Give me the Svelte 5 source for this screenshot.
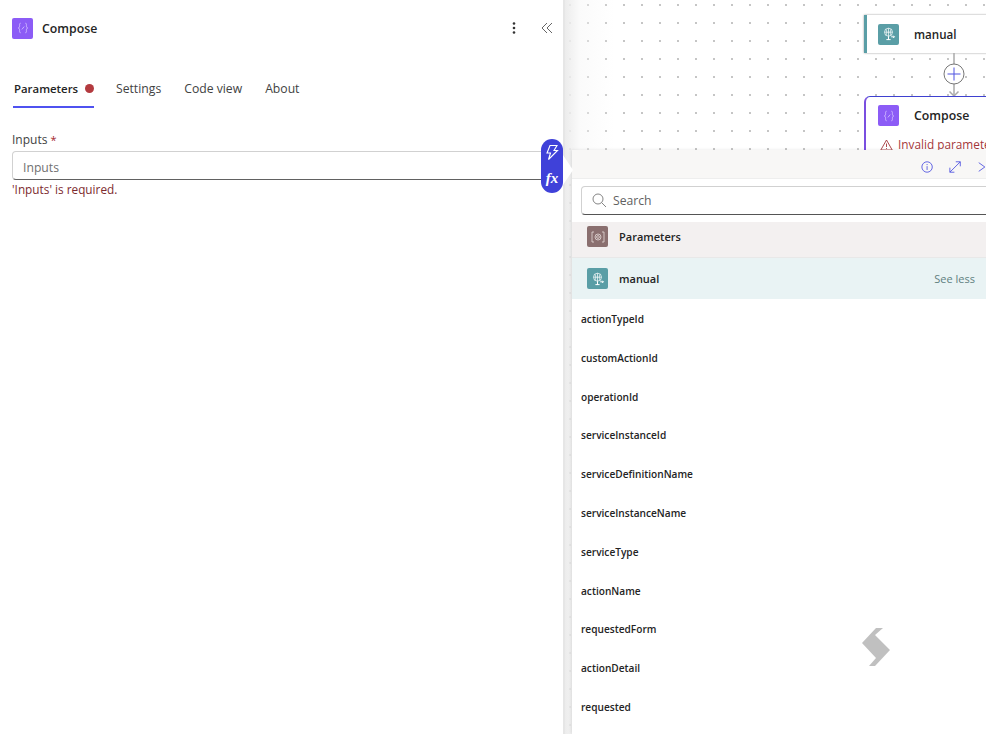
<script>
  const tabs = ['Settings', 'Code view', 'About'];
  const rows = ['actionTypeId','customActionId','operationId','serviceInstanceId','serviceDefinitionName','serviceInstanceName','serviceType','actionName','requestedForm','actionDetail','requested'];
</script>

{#snippet composeIcon()}
  <span class="tile purple">
    <svg width="12" height="12" viewBox="0 0 12 12" fill="none" stroke="#d9c8ff" stroke-width="0.8">
      <path d="M3.6 1.2C2.4 1.2 2.6 2.4 2.6 3.4S2.6 5.6 1.4 6C2.6 6.4 2.6 7.6 2.6 8.6S2.4 10.8 3.6 10.8M8.4 1.2C9.6 1.2 9.4 2.4 9.4 3.4S9.4 5.6 10.6 6C9.4 6.4 9.4 7.6 9.4 8.6S9.6 10.8 8.4 10.8M4.9 7.4L7.2 4.6"/>
    </svg>
  </span>
{/snippet}

{#snippet manualIcon()}
  <span class="tile teal">
    <svg width="14" height="14" viewBox="0 0 14 14" fill="none" stroke="#fff" stroke-width="0.7">
      <circle cx="6.5" cy="5.2" r="4"/>
      <path d="M2.5 5.2H10.5M6.5 1.2V9.2M4 2.2C5 4 5 6.4 4 8.2M9 2.2C8 4 8 6.4 9 8.2"/>
      <path d="M6.5 9.2V13M4.4 12.6H8.6M9.2 9.8H12.4M11.2 8.6L12.4 9.8L11.2 11" stroke-width="1"/>
    </svg>
  </span>
{/snippet}

<div class="page">
  <aside class="side">
    <header class="head">
      {@render composeIcon()}
      <h1>Compose</h1>
      <svg class="dots" width="4" height="14" viewBox="0 0 4 14" fill="#333"><circle cx="2" cy="2.5" r="1.3"/><circle cx="2" cy="7" r="1.3"/><circle cx="2" cy="11.5" r="1.3"/></svg>
      <svg class="chev" width="12" height="12" viewBox="0 0 12 12" fill="none" stroke="#555" stroke-width="0.9"><path d="M6 1L1 6L6 11M11 1L6 6L11 11"/></svg>
    </header>

    <nav class="tabs">
      <div class="tab active">Parameters <i class="err"></i></div>
      {#each tabs as t}<div class="tab">{t}</div>{/each}
    </nav>

    <div class="field">
      <div class="label">Inputs <span class="star">*</span></div>
      <div class="input">Inputs</div>
      <div class="msg">'Inputs' is required.</div>
    </div>
  </aside>

  <main class="canvas">
    <div class="fade"></div>

    <div class="node manual-node">
      {@render manualIcon()}
      <span class="node-name small">manual</span>
    </div>

    <svg class="edge" width="24" height="46" viewBox="0 0 24 46" fill="none">
      <path d="M12 0V43" stroke="#aaa" stroke-width="1.5"/>
      <path d="M7.5 38.5L12 43L16.5 38.5" stroke="#aaa" stroke-width="1.5"/>
      <circle cx="12" cy="21" r="10" fill="#fff" stroke="#777"/>
      <path d="M12 14.5V27.5M5.5 21H18.5" stroke="#4f52e0" stroke-width="1"/>
    </svg>

    <div class="node compose-node">
      <div class="compose-top">
        {@render composeIcon()}
        <span class="node-name">Compose</span>
      </div>
      <div class="invalid">
        <svg width="13" height="12" viewBox="0 0 13 12" fill="none" stroke="#a4373a" stroke-width="0.9"><path d="M6.5 1L12.2 11H.8Z"/><path d="M6.5 4.5V8M6.5 9V9.9"/></svg>
        <span>Invalid parameters</span>
      </div>
    </div>

    <section class="panel">
      <div class="panel-head">
        <svg width="14" height="14" viewBox="0 0 14 14" fill="none" stroke="#4f52e0"><circle cx="7" cy="7" r="6"/><path d="M7 6V10.4M7 3.6V4.8"/></svg>
        <svg width="14" height="14" viewBox="0 0 14 14" fill="none" stroke="#4f52e0" stroke-width="1"><path d="M1 13L13 1M7.8 1H13V6.2M1 7.8V13H6.2"/></svg>
        <svg width="10" height="12" viewBox="0 0 10 12" fill="none" stroke="#4f52e0"><path d="M2 1L9 6L2 11"/></svg>
      </div>
      <div class="search">
        <svg width="15" height="15" viewBox="0 0 15 15" fill="none" stroke="#777" stroke-width="0.9"><circle cx="6" cy="6" r="5"/><path d="M9.6 9.6L14 14"/></svg>
        <span>Search</span>
      </div>
      <div class="group params">
        <span class="tile brown">
          <svg width="14" height="12" viewBox="0 0 14 12" fill="none" stroke="#e6dcd9" stroke-width="0.8"><path d="M3 1H1V11H3M11 1H13V11H11"/><circle cx="7" cy="6" r="1.4"/><circle cx="7" cy="6" r="3"/></svg>
        </span>
        <span class="group-name">Parameters</span>
      </div>
      <div class="group man">
        {@render manualIcon()}
        <span class="group-name">manual</span>
        <span class="see">See less</span>
      </div>
      <ul class="list">
        {#each rows as r}<li>{r}</li>{/each}
      </ul>
    </section>

    <svg class="logo" width="30" height="40" viewBox="0 0 30 40"><path d="M14 1H21L13 8L28 23L13 39H7L14 31L0 16Z" fill="#c0c0c0"/></svg>
  </main>

  <div class="pill">
    <svg width="16" height="17" viewBox="0 0 16 17" fill="none" stroke="#fff" stroke-width="1.1"><path d="M6 1.5H13L10 6.5H13.5L4.5 15.5L6.5 9H3Z"/></svg>
    <span class="fx">fx</span>
  </div>
  <div class="caret"></div>
</div>

<style>
  :global(body) { margin: 0; background: #fff; overflow: hidden; }
  .page { position: relative; display: flex; width: 986px; height: 734px; overflow: hidden; font-family: "Open Sans", "Noto Sans", sans-serif; color: #242424; }
  .side { width: 563px; flex: none; border-right: 2px solid #e6e6e6; box-sizing: content-box; }
  .head { display: flex; align-items: center; height: 20px; padding: 18px 12px 0; }
  .head h1 { flex: 1; margin: 0 0 0 9px; font-size: 12.3px; font-weight: 600; }
  .dots { margin-right: 25px; }
  .chev { margin-right: -2px; }
  .tile { display: inline-flex; align-items: center; justify-content: center; width: 21px; height: 21px; border-radius: 2px; flex: none; }
  .purple { background: #8c5cf6; }
  .teal { background: #5a9ea6; }
  .brown { background: #8a6f6f; }

  .tabs { display: flex; gap: 23px; margin: 39px 0 0 13px; height: 32px; font-size: 12.2px; color: #424242; }
  .tab { height: 30px; padding-top: 3px; box-sizing: border-box; line-height: 17px; }
  .tab.active { display: flex; align-items: flex-start; gap: 7px; width: 81px; margin-right: -1px; border-bottom: 2px solid #4f52f0; height: 31px; color: #242424; font-weight: 600; white-space: nowrap; font-size: 11.4px; padding-left: 1px; }
  .err { width: 9px; height: 9px; margin-top: 4px; border-radius: 50%; background: #b33a3f; flex: none; }

  .field { margin: 22px 0 0 12px; width: 541px; }
  .label { font-size: 12px; line-height: 17px; color: #424242; }
  .star { color: #a4262c; font-size: 11px; }
  .input { height: 29px; margin-top: 3px; padding-left: 10px; box-sizing: border-box; border: 1px solid #d1d1d1; border-bottom-color: #616161; border-radius: 4px; font-size: 12.2px; line-height: 31px; color: #707070; background: #fff; }
  .msg { font-size: 11.8px; line-height: 18px; color: #7d2a2e; }

  .canvas { position: relative; flex: 1; overflow: hidden; background-color: #fff; background-image: radial-gradient(circle at 1px 1px, #c4c4c4 0.7px, transparent 1px); background-size: 18px 18px; background-position: 4px 4px; }
  .fade { position: absolute; left: 0; top: 0; bottom: 0; width: 50px; background: linear-gradient(90deg, #ececec, rgba(246,246,246,.5) 30%, rgba(255,255,255,0)); }
  .node { position: absolute; left: 299px; width: 200px; background: #fff; box-sizing: border-box; }
  .manual-node { top: 15px; height: 38px; display: flex; align-items: center; gap: 15px; padding-left: 11px; border-left: 3px solid #5a9ea6; box-shadow: 0 0 2px rgba(0,0,0,.4); }
  .compose-node { top: 96px; height: 80px; border: 1px solid #3f41d0; border-left: 2px solid #7a4fe0; border-radius: 6px 0 0 0; padding: 8px 0 0 12px; }
  .compose-top { display: flex; align-items: center; gap: 15px; }
  .node-name { font-size: 12.3px; font-weight: 600; color: #242424; }
  .node-name.small { font-size: 11.6px; }
  .invalid { display: flex; align-items: center; gap: 5px; margin-top: 10px; margin-left: 1px; padding-left: 1px; font-size: 11.8px; color: #a4373a; white-space: nowrap; line-height: 17px; }
  .edge { position: absolute; left: 377px; top: 53px; }

  .panel { position: absolute; left: 7px; top: 150px; width: 414px; height: 584px; background: #fff; box-shadow: -1px 0 3px rgba(0,0,0,.1); }
  .panel-head { display: flex; align-items: center; gap: 16px; height: 23px; padding: 5px 0 0 349px; background: #f8f7f6; border-bottom: 1px solid #eee; }
  .search { display: flex; align-items: center; gap: 6px; width: 430px; height: 29px; margin: 7px 0 0 9px; padding-left: 10px; box-sizing: border-box; border: 1px solid #d1d1d1; border-bottom-color: #555; border-radius: 4px; font-size: 12.2px; color: #616161; }
  .group { display: flex; align-items: center; gap: 11px; padding-left: 15px; box-sizing: border-box; }
  .params { height: 36px; margin-top: 7px; background: #f3f0f0; border-bottom: 1px solid #e8e8e8; padding-bottom: 6px; }
  .man { height: 41px; background: #e9f3f4; }
  .group-name { font-size: 11px; font-weight: 600; color: #242424; }
  .see { margin-left: auto; margin-right: 11px; font-size: 11px; color: #5f7f7f; }
  .list { margin: 0; padding: 0 0 0 9px; list-style: none; }
  .list li { height: 38.8px; line-height: 40px; font-size: 10.15px; font-weight: 600; color: #242424; }
  .logo { position: absolute; left: 297px; top: 627px; }

  .pill { position: absolute; left: 541px; top: 139px; width: 22px; height: 54px; border-radius: 11px; background: #3f41d9; display: flex; flex-direction: column; align-items: center; padding-top: 5px; box-sizing: border-box; color: #fff; }
  .fx { font-family: "Liberation Serif", serif; font-style: italic; font-weight: 700; font-size: 15px; line-height: 17px; margin-top: 9px; }
  .caret { position: absolute; left: 563px; top: 155px; width: 0; height: 0; border-top: 15px solid transparent; border-bottom: 15px solid transparent; border-left: 10px solid #fff; }
</style>
